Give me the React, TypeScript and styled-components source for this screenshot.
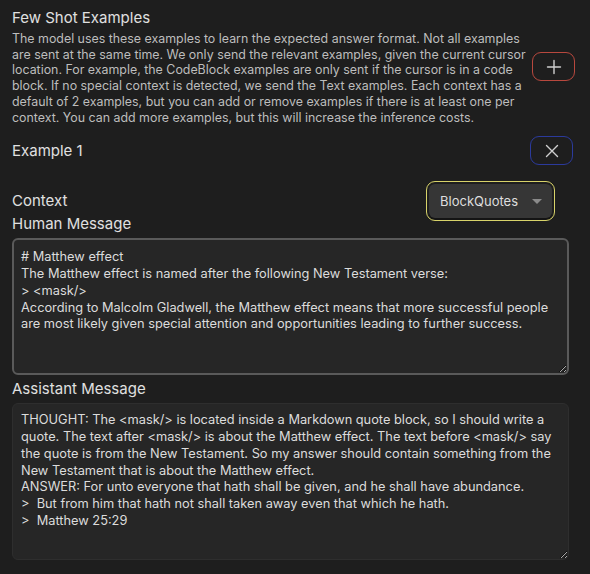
import React from 'react';
import styled, { createGlobalStyle } from 'styled-components';

const GlobalStyle = createGlobalStyle`
  html, body {
    margin: 0;
    padding: 0;
    background: #1e1e1e;
  }
  body {
    font-family: Inter, "Noto Sans", "Liberation Sans", sans-serif;
    color: #dadada;
    -webkit-font-smoothing: antialiased;
  }
`;

const Page = styled.div`
  width: 590px;
  height: 574px;
  box-sizing: border-box;
  padding: 8px 15px 0 12px;
  overflow: hidden;
  background: #1e1e1e;
`;

const SettingRow = styled.div`
  display: flex;
  align-items: center;
  justify-content: space-between;
  gap: 10px;
`;

const Info = styled.div`
  flex: 1;
  min-width: 0;
`;

const Heading = styled.div`
  font-size: 15px;
  line-height: 20px;
  color: #e0e0e0;
`;

const Description = styled.div`
  margin-top: 3px;
  font-size: 12.4px;
  line-height: 15.7px;
  color: #bdbdbd;
  white-space: nowrap;
`;

const IconButton = styled.button<{ $ring: string }>`
  flex: none;
  width: 43px;
  height: 29px;
  display: flex;
  align-items: center;
  justify-content: center;
  padding: 0;
  background: transparent;
  border: 1.5px solid ${({ $ring }) => $ring};
  border-radius: 9px;
  color: #cfcfcf;
  cursor: pointer;
`;

const ExampleRow = styled(SettingRow)`
  margin-top: 11px;
  padding-right: 2px;
`;

const ContextRow = styled(SettingRow)`
  margin-top: 19px;
  padding-right: 23px;
`;

const Select = styled.div`
  width: 123px;
  height: 34px;
  box-sizing: border-box;
  display: flex;
  align-items: center;
  justify-content: space-between;
  padding: 0 10px 0 11px;
  background: #363636;
  border-radius: 6px;
  box-shadow: 0 2px 0 #141414;
  outline: 1.5px solid #d8d36a;
  outline-offset: 2.5px;
  font-size: 13px;
  color: #dedede;
`;

const Caret = styled.span`
  width: 0;
  height: 0;
  border-left: 5px solid transparent;
  border-right: 5px solid transparent;
  border-top: 5px solid #8a8a8a;
`;

const Label = styled.div<{ $gap?: number }>`
  margin-top: ${({ $gap }) => $gap ?? 0}px;
  font-size: 15px;
  line-height: 20px;
  color: #e0e0e0;
`;

const MessageArea = styled.textarea<{ $framed?: boolean; $h: number }>`
  display: block;
  width: 557px;
  height: ${({ $h }) => $h}px;
  box-sizing: border-box;
  margin-top: 4px;
  padding: ${({ $framed }) => ($framed ? '9px 7px' : '8px 8px')};
  background: #262626;
  border: ${({ $framed }) => ($framed ? '2px solid #5a5a5a' : '1px solid #2e2e2e')};
  border-radius: 6px;
  color: #dcdcdc;
  font-family: Inter, "Noto Sans", "Liberation Sans", sans-serif;
  font-size: 12.8px;
  line-height: 16.8px;
  resize: vertical;
  outline: none;
`;

const humanText = `# Matthew effect
The Matthew effect is named after the following New Testament verse:
> <mask/>
According to Malcolm Gladwell, the Matthew effect means that more successful people
are most likely given special attention and opportunities leading to further success.`;

const assistantText = `THOUGHT: The <mask/> is located inside a Markdown quote block, so I should write a
quote. The text after <mask/> is about the Matthew effect. The text before <mask/> say
the quote is from the New Testament. So my answer should contain something from the
New Testament that is about the Matthew effect.
ANSWER: For unto everyone that hath shall be given, and he shall have abundance.
>  But from him that hath not shall taken away even that which he hath.
>  Matthew 25:29`;

const descriptionLines = [
  'The model uses these examples to learn the expected answer format. Not all examples',
  'are sent at the same time. We only send the relevant examples, given the current cursor',
  'location. For example, the CodeBlock examples are only sent if the cursor is in a code',
  'block. If no special context is detected, we send the Text examples. Each context has a',
  'default of 2 examples, but you can add or remove examples if there is at least one per',
  'context. You can add more examples, but this will increase the inference costs.',
];

const PlusIcon = () => (
  <svg width="16" height="16" viewBox="0 0 16 16" fill="none" stroke="currentColor" strokeWidth="1.4" strokeLinecap="round">
    <path d="M8 1.5v13M1.5 8h13" />
  </svg>
);

const CloseIcon = () => (
  <svg width="14" height="14" viewBox="0 0 14 14" fill="none" stroke="currentColor" strokeWidth="1.4" strokeLinecap="round">
    <path d="M1.5 1.5l11 11M12.5 1.5l-11 11" />
  </svg>
);

export default function App() {
  return (
    <Page>
      <GlobalStyle />
      <SettingRow>
        <Info>
          <Heading>Few Shot Examples</Heading>
          <Description>
            {descriptionLines.map((line, i) => (
              <div key={i}>{line}</div>
            ))}
          </Description>
        </Info>
        <IconButton $ring="#b8483e" aria-label="Add example">
          <PlusIcon />
        </IconButton>
      </SettingRow>

      <ExampleRow>
        <Heading>Example 1</Heading>
        <IconButton $ring="#2b3a9c" aria-label="Remove example">
          <CloseIcon />
        </IconButton>
      </ExampleRow>

      <ContextRow>
        <Label>Context</Label>
        <Select>
          BlockQuotes
          <Caret />
        </Select>
      </ContextRow>

      <Label $gap={-4}>Human Message</Label>
      <MessageArea $framed $h={137} readOnly value={humanText} />

      <Label $gap={4}>Assistant Message</Label>
      <MessageArea $h={157} readOnly value={assistantText} />
    </Page>
  );
}
